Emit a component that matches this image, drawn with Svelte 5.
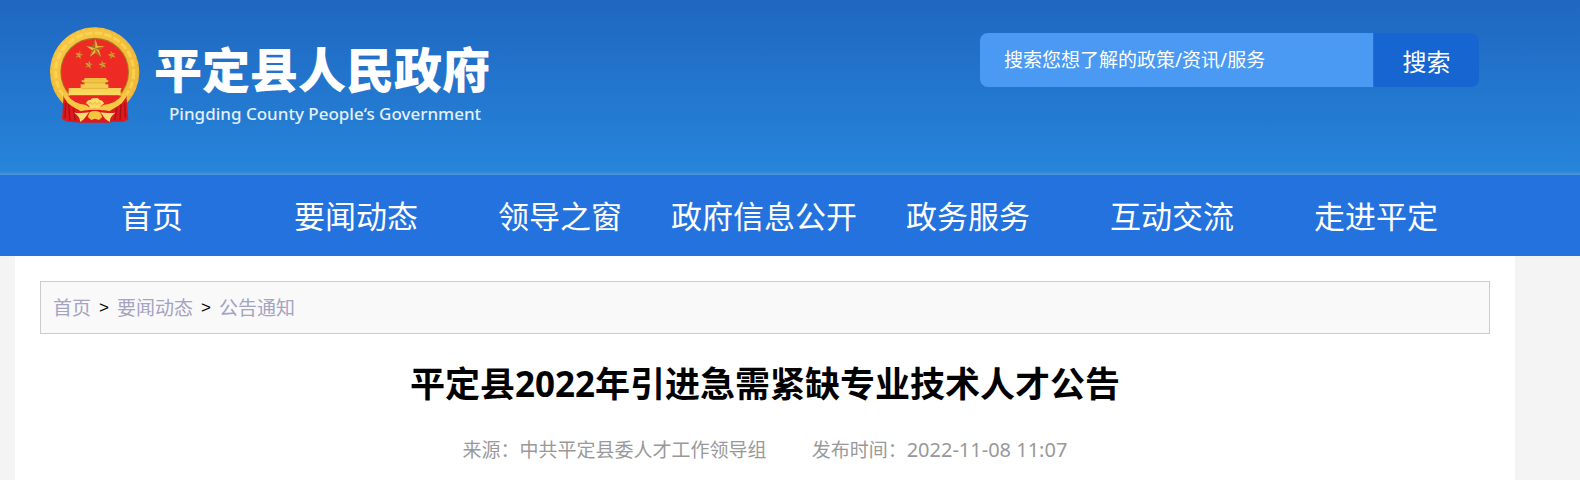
<script>
    const navItems = ['首页', '要闻动态', '领导之窗', '政府信息公开', '政务服务', '互动交流', '走进平定'];
    const crumbs = ['首页', '要闻动态', '公告通知'];

    // small stars of the emblem: centre and rotation
    const stars = [
        { x: 147, y: 134, r: 15 },
        { x: 246, y: 134, r: -15 },
        { x: 176, y: 163, r: 10 },
        { x: 218, y: 163, r: -10 }
    ];

    let keyword = '';
</script>

<svelte:head>
    <title>平定县人民政府</title>
</svelte:head>

<header>
    <a class="logo" href="/">
        <svg class="emblem" viewBox="60 50 270 288" aria-hidden="true">
            <defs>
                <linearGradient id="gold" x1="0" y1="0" x2="1" y2="1">
                    <stop offset="0" stop-color="#f8cb48" />
                    <stop offset="0.5" stop-color="#f3bd38" />
                    <stop offset="1" stop-color="#f0b838" />
                </linearGradient>
                <linearGradient id="wall" x1="0" y1="0" x2="0" y2="1">
                    <stop offset="0" stop-color="#efc040" />
                    <stop offset="1" stop-color="#fbdc60" />
                </linearGradient>
            </defs>
            <circle cx="194" cy="185" r="134" fill="url(#gold)" />
            <circle cx="194" cy="185" r="131" fill="none" stroke="#e0a22e" stroke-width="2" stroke-dasharray="7 12" />
            <circle cx="194" cy="185" r="117" fill="none" stroke="#ffd95c" stroke-width="9" stroke-dasharray="22 7" opacity="0.7" />
            <circle cx="194" cy="185" r="103" fill="#a87424" />
            <circle cx="194" cy="186" r="100" fill="#ee2a25" />
            <path d="M101 254 Q118 284 152 303 L176 297 L214 297 L238 303 Q272 284 289 254 L295 328 L278 334 L250 334 L236 337 L152 337 L138 336 L112 334 L96 326 Z" fill="#dc1a1e" />
            <path d="M116 282 L120 330 M107 278 L105 322 M273 282 L270 330 M284 278 L286 322 M130 294 L136 330 M260 294 L254 330" stroke="#a90f16" stroke-width="4" fill="none" />
            <path d="M196 86 L203 107 L224 107 L207 120 L213 139 L196 127 L180 139 L186 120 L169 107 L190 107 Z" fill="#e9b740" />
            <path d="M196 86 L196 114 L190 107 Z M224 107 L196 114 L207 120 Z M213 139 L196 114 L196 127 Z M180 139 L196 114 L186 120 Z M169 107 L196 114 L190 107 Z" fill="#a9681e" />
            {#each stars as star}
                <g transform="translate({star.x} {star.y}) rotate({star.r})">
                    <path d="M0 -13 L3 -4 L12 -4 L5 2 L8 11 L0 5 L-8 11 L-5 2 L-12 -4 L-3 -4 Z" fill="#dfa636" />
                    <path d="M0 -13 L0 0 L-3 -4 Z M12 -4 L0 0 L5 2 Z M-8 11 L0 0 L-5 2 Z" fill="#a9681e" />
                </g>
            {/each}
            <path d="M164 203 H228 L231 210 H236 L233 216 H226 V222 H235 V233 H275 L272 240 V255 H116 V233 H152 V222 H164 V216 H157 L154 210 H162 Z" fill="url(#wall)" />
            <path d="M160 217 H229 M154 234 H234" stroke="#dba337" stroke-width="2" />
            <path d="M112 256 H278 Q262 278 244 284 L214 290 H174 L146 284 Q126 276 112 256 Z" fill="#e92622" />
            <path d="M98 250 Q106 246 112 254 Q130 280 168 284 L176 290 L194 294 L212 290 L220 284 Q258 280 276 254 Q284 246 292 250 Q284 280 248 295 Q226 303 208 298 H180 Q162 303 140 295 Q106 280 98 250 Z" fill="#f6c944" />
            <path d="M168 279 Q172 268 181 269 Q187 260 195 264 Q204 260 209 269 Q219 269 222 280 Q215 283 211 290 Q203 297 194 291 Q185 297 179 290 Q175 283 168 279 Z" fill="#ffdc66" />
            <path d="M178 282 L182 276 L187 283 L194 275 L201 283 L207 276 L212 282" stroke="#dda036" stroke-width="2" fill="none" />
            <path d="M132 307 Q156 310 177 306 L162 326 L151 335 Q150 318 132 307 Z M257 307 Q232 310 211 306 L226 326 L239 335 Q239 318 257 307 Z" fill="#f8dc70" />
            <path d="M179 306 Q194 298 210 306 L217 320 L207 329 L195 325 L184 329 L173 320 Z" fill="#f5c440" />
        </svg>
        <span class="names">
            <strong>平定县人民政府</strong>
            <span class="english">Pingding County People‘s Government</span>
        </span>
    </a>
    <form class="search" on:submit|preventDefault>
        <input type="text" aria-label="搜索" placeholder="搜索您想了解的政策/资讯/服务" bind:value={keyword}>
        <button type="submit">搜索</button>
    </form>
</header>

<nav>
    {#each navItems as item}
        <a href="#top">{item}</a>
    {/each}
</nav>

<main>
    <div class="crumbs">
        {#each crumbs as crumb, i}
            {#if i > 0}<span class="arrow">&gt;</span>{/if}
            <a href="#top">{crumb}</a>
        {/each}
    </div>
    <h1>平定县2022年引进急需紧缺专业技术人才公告</h1>
    <div class="meta">
        <span>来源：中共平定县委人才工作领导组</span>
        <span>发布时间：<time datetime="2022-11-08T11:07">2022-11-08 11:07</time></span>
    </div>
</main>

<style>
    :global(body) {
        margin: 0;
        background-color: #f4f4f4;
        font-family: "Noto Sans", "Noto Sans CJK SC", sans-serif;
    }
    a {
        text-decoration: none;
    }
    header {
        display: flex;
        justify-content: space-between;
        align-items: flex-start;
        box-sizing: border-box;
        height: 175px;
        padding: 27px 101px 0 50px;
        background: linear-gradient(#1f67c1, #2684d9 171px, #4f97d6);
    }
    .logo {
        display: flex;
        gap: 14px;
        color: #fff;
    }
    .emblem {
        width: 90px;
        height: 96px;
    }
    .names {
        display: flex;
        flex-direction: column;
        padding-top: 15px;
    }
    .names strong {
        font-size: 48px;
        font-weight: 900;
        line-height: 56px;
    }
    .english {
        padding: 4px 0 0 15px;
        font-size: 17px;
        font-weight: 500;
        line-height: 24px;
        color: #e3effb;
    }
    .search {
        display: flex;
        width: 499px;
        height: 54px;
        margin-top: 6px;
    }
    .search input {
        flex: 1;
        min-width: 0;
        padding: 0 24px;
        border: 0;
        border-radius: 8px 0 0 8px;
        background-color: #4a9af4;
        color: #fff;
        font: inherit;
        font-size: 19px;
    }
    .search input::placeholder {
        color: #fff;
        opacity: 1;
    }
    .search button {
        width: 106px;
        padding: 0;
        border: 0;
        border-left: 1px solid #2472d0;
        border-radius: 0 8px 8px 0;
        background-color: #1765d0;
        color: #fff;
        font: inherit;
        font-size: 24px;
        cursor: pointer;
    }
    nav {
        display: flex;
        padding: 1px 102px 0 50px;
        background-color: #2472de;
    }
    nav a {
        flex: 1 1 0;
        color: #fff;
        font-size: 31px;
        line-height: 80px;
        text-align: center;
        white-space: nowrap;
    }
    main {
        margin: 0 65px 0 15px;
        padding: 25px 25px 16px;
        background-color: #fff;
    }
    .crumbs {
        display: flex;
        gap: 8px;
        padding: 1px 12px 0;
        border: 1px solid #ccc;
        background-color: #f9f9f9;
        font-size: 19px;
        line-height: 50px;
    }
    .crumbs a {
        color: #a3a3c2;
    }
    .arrow {
        color: #000;
        font-family: "Liberation Sans", sans-serif;
        font-size: 17px;
    }
    h1 {
        margin: 24px 0 0;
        color: #000;
        font-size: 35px;
        line-height: 52px;
        text-align: center;
    }
    .meta {
        display: flex;
        justify-content: center;
        gap: 45px;
        padding-top: 26px;
        color: #999;
        font-size: 19px;
        line-height: 28px;
    }
    .meta time {
        font-size: 20px;
    }
</style>
